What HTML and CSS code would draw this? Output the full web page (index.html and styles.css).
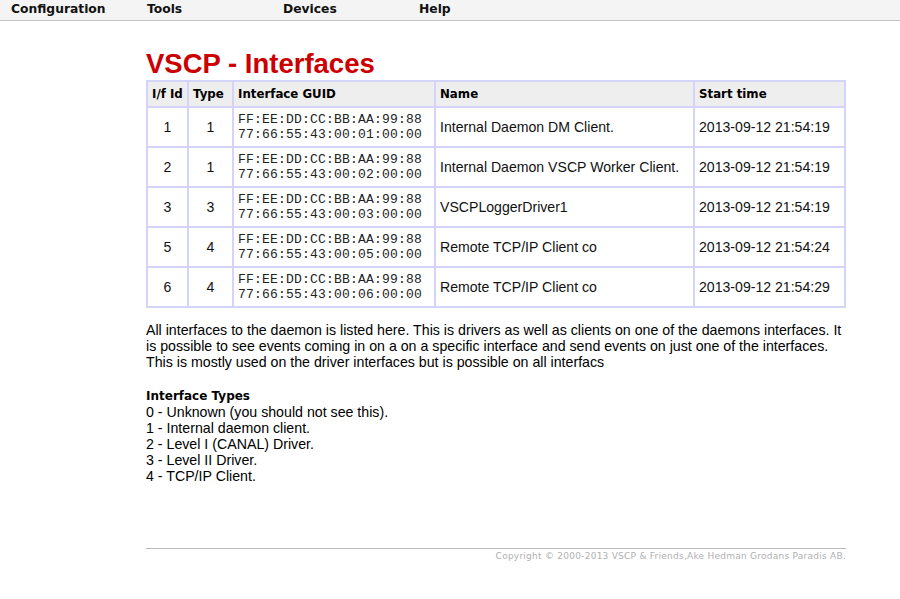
FILE: index.html
```html
<!DOCTYPE html>
<html>
<head>
<meta charset="utf-8">
<link rel="stylesheet" href="styles.css">
</head>
<body>
<nav class="menubar">
  <span class="menu-item">Configuration</span>
  <span class="menu-item">Tools</span>
  <span class="menu-item">Devices</span>
  <span class="menu-item">Help</span>
</nav>
<main class="content">
  <h1 class="title">VSCP - Interfaces</h1>
  <table class="iftable">
    <thead>
      <tr>
        <th class="c-id">I/f Id</th>
        <th class="c-type">Type</th>
        <th class="c-guid">Interface GUID</th>
        <th class="c-name">Name</th>
        <th class="c-time">Start time</th>
      </tr>
    </thead>
    <tbody>
      <tr>
        <td class="center">1</td><td class="center">1</td>
        <td class="guid">FF:EE:DD:CC:BB:AA:99:88<br>77:66:55:43:00:01:00:00</td>
        <td>Internal Daemon DM Client.</td><td>2013-09-12 21:54:19</td>
      </tr>
      <tr>
        <td class="center">2</td><td class="center">1</td>
        <td class="guid">FF:EE:DD:CC:BB:AA:99:88<br>77:66:55:43:00:02:00:00</td>
        <td>Internal Daemon VSCP Worker Client.</td><td>2013-09-12 21:54:19</td>
      </tr>
      <tr>
        <td class="center">3</td><td class="center">3</td>
        <td class="guid">FF:EE:DD:CC:BB:AA:99:88<br>77:66:55:43:00:03:00:00</td>
        <td>VSCPLoggerDriver1</td><td>2013-09-12 21:54:19</td>
      </tr>
      <tr>
        <td class="center">5</td><td class="center">4</td>
        <td class="guid">FF:EE:DD:CC:BB:AA:99:88<br>77:66:55:43:00:05:00:00</td>
        <td>Remote TCP/IP Client co</td><td>2013-09-12 21:54:24</td>
      </tr>
      <tr>
        <td class="center">6</td><td class="center">4</td>
        <td class="guid">FF:EE:DD:CC:BB:AA:99:88<br>77:66:55:43:00:06:00:00</td>
        <td>Remote TCP/IP Client co</td><td>2013-09-12 21:54:29</td>
      </tr>
    </tbody>
  </table>
  <p class="desc">All interfaces to the daemon is listed here. This is drivers as well as clients on one of the daemons interfaces. It is possible to see events coming in on a on a specific interface and send events on just one of the interfaces. This is mostly used on the driver interfaces but is possible on all interfacs</p>
  <div class="types">
    <div class="types-title">Interface Types</div>
    <div>0 - Unknown (you should not see this).</div>
    <div>1 - Internal daemon client.</div>
    <div>2 - Level I (CANAL) Driver.</div>
    <div>3 - Level II Driver.</div>
    <div>4 - TCP/IP Client.</div>
  </div>
  <footer class="footer">Copyright © 2000-2013 VSCP &amp; Friends,Ake Hedman Grodans Paradis AB.</footer>
</main>
</body>
</html>
```

FILE: styles.css
```css
html, body {
  margin: 0;
  padding: 0;
  background: #ffffff;
}
body {
  font-family: "Liberation Sans", Arial, sans-serif;
  font-size: 14.2px;
  color: #000;
}
.menubar {
  height: 20px;
  background: #f4f4f4;
  border-bottom: 1px solid #c4c4c4;
  display: flex;
  padding-left: 11px;
}
.menu-item {
  width: 136px;
  font-family: "DejaVu Sans", Verdana, sans-serif;
  font-weight: bold;
  font-size: 12.3px;
  line-height: 18px;
  color: #111;
}
.content {
  margin-left: 146px;
  width: 700px;
}
.title {
  margin: 0;
  padding-top: 26px;
  font-family: "Liberation Sans", Arial, sans-serif;
  font-weight: bold;
  font-size: 27.5px;
  line-height: 33px;
  color: #cc0000;
}
.iftable {
  border-collapse: collapse;
  width: 700px;
  border: 2px solid #d4d4fa;
  table-layout: fixed;
}
.iftable th, .iftable td {
  border: 2px solid #d4d4fa;
  padding: 0 4px;
  text-align: left;
  vertical-align: middle;
}
.iftable th {
  background: #eeeeee;
  font-family: "DejaVu Sans", Verdana, sans-serif;
  font-size: 11.8px;
  font-weight: bold;
  height: 24px;
}
.iftable td {
  height: 38px;
  font-size: 14.1px;
  color: #111;
}
.c-id { width: 31px; }
.c-type { width: 35px; }
.c-guid { width: 192px; }
.c-name { width: 249px; }
.iftable td.center { text-align: center; }
.iftable td.guid {
  font-family: "Liberation Mono", "Courier New", monospace;
  font-size: 13px;
  letter-spacing: 0.2px;
  line-height: 15px;
  color: #222;
}
.desc {
  margin: 14px 0 0 0;
  line-height: 16px;
}
.types {
  margin-top: 18px;
  line-height: 16px;
}
.types-title {
  font-family: "DejaVu Sans", Verdana, sans-serif;
  font-weight: bold;
  font-size: 12px;
}
.footer {
  margin-top: 64px;
  border-top: 1px solid #bbbbbb;
  padding-top: 2px;
  text-align: right;
  font-family: "DejaVu Sans", Verdana, sans-serif;
  font-size: 9px;
  letter-spacing: 0.25px;
  color: #b0b0b0;
}
```
